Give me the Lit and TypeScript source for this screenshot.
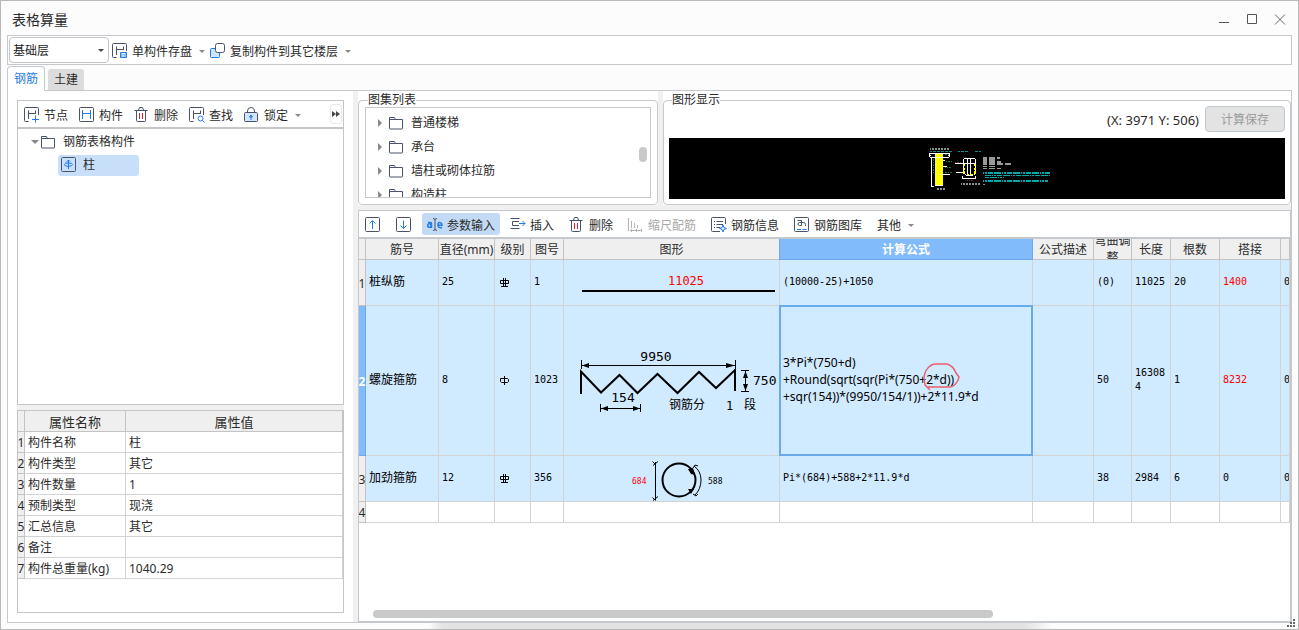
import { LitElement, html, css, svg, nothing, TemplateResult } from "lit";
import { customElement, property, state } from "lit/decorators.js";
import { classMap } from "lit/directives/class-map.js";

const INK = "#4a5268";
const BLUE = "#1f7be8";

const frame = svg`<path d="M4.500 14.500H1.500a1 1 0 0 1-1-1v-12a1 1 0 0 1 1-1h12a1 1 0 0 1 1 1V8" stroke=${INK}/><path d="M4.500 3.500V12M11.500 3.500V7M4.500 6.500h7" stroke=${INK}/>`;

const icons: Record<string, TemplateResult> = {
  save: svg`${frame}<path d="M8.500 9.500h6v5h-6z" fill="#8fbcf5" stroke=${BLUE}/><path d="M10 10.500h3M10.500 13h2" stroke="#fff"/>`,
  copy: svg`<path d="M6 5.500H1.500a1 1 0 0 0-1 1v7a1 1 0 0 0 1 1h7a1 1 0 0 0 1-1V10" fill="#cfe3fb" stroke=${BLUE}/><rect x="5.500" y="0.500" width="9" height="9" rx="2" fill="#fff" stroke=${INK}/>`,
  node: svg`${frame}<path d="M11.500 8.500v7M8 12.500h7" stroke=${BLUE}/>`,
  part: svg`<rect x="0.500" y="0.500" width="14" height="14" rx="1" stroke=${INK}/><path d="M3.500 3v9M11.500 3v9M3.500 6.500h8" stroke=${BLUE}/>`,
  trash: svg`<path d="M0.500 3.500h13M2.500 3.500v10a1 1 0 0 0 1 1h7a1 1 0 0 0 1-1v-10M4.500 3l1-2.500h3L9.500 3" stroke=${INK}/><path d="M5.500 6v6M8.500 6v6" stroke="#e0202c"/>`,
  find: svg`${frame}<circle cx="11.500" cy="11.500" r="2.500" stroke=${BLUE}/><path d="M13.500 13.500l2 2" stroke=${BLUE}/>`,
  lock: svg`<path d="M3.500 6V4a3.500 3.500 0 0 1 7 0v2" stroke=${INK}/><rect x="0.500" y="5.500" width="13" height="9" rx="1" fill="#d3e5fc" stroke=${INK}/><path d="M7 8v5M5.500 10L7 8l1.500 2z" stroke=${BLUE}/>`,
  up: svg`<rect x="0.500" y="0.500" width="14" height="14" rx="1" stroke=${INK}/><path d="M7.500 12V4M4.500 6.500l3-3 3 3" stroke=${BLUE}/>`,
  down: svg`<rect x="0.500" y="0.500" width="14" height="14" rx="1" stroke=${INK}/><path d="M7.500 3.500v8M4.500 8.500l3 3 3-3" stroke=${BLUE}/>`,
  param: svg`<circle cx="2.500" cy="8.500" r="1.800" stroke=${BLUE} stroke-width="1.500"/><path d="M1 5.500h2.500q1 0 1 1V11" stroke=${BLUE} stroke-width="1.500"/><path d="M6 1.500q2 0 2 1.500v9q0 1.500-2 1.500M10 1.500q-2 0-2 1.500M10 13.500q-2 0-2-1.500" stroke=${INK}/><path d="M15 10.500q-4 .8-4-2.500t2.300-2.300Q15 6 15 8.200h-4" stroke=${BLUE} stroke-width="1.500"/>`,
  insert: svg`<path d="M0.500 1.500h9M0.500 11.500h9M9 4.500H2.500v4H9" stroke=${INK}/><path d="M9 6.500h6M12.500 4l2.500 2.500L12.500 9" stroke=${BLUE}/>`,
  scale: svg`<path d="M0.500 1v13M3.500 4v7M6.500 6v5M9.500 8v3M2 13.500h12M3.500 12v3M8.500 12v3M13.500 12v3" stroke="#b4b4b4"/>`,
  info: svg`<path d="M9 14.500H1.500a1 1 0 0 1-1-1v-12a1 1 0 0 1 1-1h12a1 1 0 0 1 1 1V7" stroke=${INK}/><path d="M3 4.500h1M5.500 4.500H12M3 7.500h1M5.500 7.500H12M3 10.500h1M5.500 10.500H9" stroke=${INK}/><path d="M12 8l1 2.500 2.500 1-2.500 1-1 2.500-1-2.500-2.500-1 2.500-1z" fill="#dceafd" stroke=${BLUE}/>`,
  library: svg`<rect x="0.500" y="0.500" width="14" height="14" rx="1" stroke=${INK}/><path d="M3.500 3.500h4v5h-2a1.500 1.500 0 0 1 0-3h4a2 2 0 0 1 2 2V9" stroke=${INK}/><path d="M3 12.500h4M8.500 12.500h4" stroke=${BLUE}/>`,
  folder: svg`<path d="M0.500 13.500v-11h5l1 2h7v9a.5.5 0 0 1-.5.5h-12a.5.5 0 0 1-.5-.5zM0.500 4.500h7" stroke=${INK}/>`,
  column: svg`<rect x="0.500" y="0.500" width="14" height="14" rx="1" stroke=${INK}/><path d="M7.500 3v9M5 5.500L7.500 3 9 4.500M3.500 7.500q0-1.500 4-1.500t4 1.500-4 1.800-4-1.800z" stroke=${BLUE}/>`,
};

@customElement("ui-icon")
class UiIcon extends LitElement {
  static styles = css`
    :host { display: block; flex: none; width: 16px; height: 16px; }
    .glyph { display: block; }
  `;
  @property() name = "";
  render() {
    return html`<svg class="glyph" width="16" height="16" viewBox="0 0 16 16" fill="none" aria-hidden="true">${icons[this.name]}</svg>`;
  }
}

interface Tool { icon?: string; label: string; text?: boolean; menu?: boolean; active?: boolean; disabled?: boolean }

@customElement("tool-bar")
class ToolBar extends LitElement {
  static styles = css`
    :host { display: flex; align-items: center; gap: 11px; min-width: 0; }
    :host([padded]), :host([compact]) { gap: 5px; }
    .tool {
      display: flex; align-items: center; gap: 4px; flex: none; box-sizing: border-box;
      margin: 0; padding: 2px 0 0; border: 0; border-radius: 3px; background: none;
      height: 22px; color: #2b2b2b; white-space: nowrap;
      font: 12px/18px "Noto Sans", "Noto Sans CJK SC", sans-serif;
    }
    :host([padded]) .tool { padding: 2px 5px 0; }
    .active { background: #c2daf4; }
    .tool:disabled { color: #a9a9a9; }
    .label { padding-top: 2px; }
    .caret { border: 3px solid transparent; border-top-color: #8a8a8a; border-bottom: 0; margin-left: 3px; }
  `;
  @property({ attribute: false }) tools: Tool[] = [];
  render() {
    return this.tools.map((t) => html`
      <button class=${classMap({ tool: true, active: !!t.active })} ?disabled=${t.disabled} aria-label=${t.label}>
        ${t.icon ? html`<ui-icon name=${t.icon}></ui-icon>` : nothing}
        ${t.text === false ? nothing : html`<span class="label">${t.label}</span>`}
        ${t.menu ? html`<span class="caret"></span>` : nothing}
      </button>`);
  }
}

/* Reinforcement grade marks: plain bar and ribbed bar */
const plainBar = html`<svg class="grade" width="11" height="11" viewBox="0 0 11 11" role="img" aria-label="HPB300"><path d="M1.500 3.500h7l1 1v2l-1 1h-6l-1-1zM5.500 1v9" fill="none" stroke="#000"/></svg>`;
const ribbedBar = html`<svg class="grade" width="11" height="11" viewBox="0 0 11 11" role="img" aria-label="HRB400"><path d="M1.500 3.500h8M1.500 6.500h8M1.500 3.500v3M9.500 3.500v3M4.500 1v8.500M6.500 1v8.500M2 9.500h7" fill="none" stroke="#000"/></svg>`;

const straightShape = html`<svg class="shape" width="215" height="45" viewBox="0 0 215 45">
  <text class="dim red" x="122" y="25" text-anchor="middle">11025</text>
  <path d="M18 31H211" stroke="#000" stroke-width="2"/></svg>`;

const spiralShape = html`<svg class="shape" width="215" height="149" viewBox="0 1 215 149">
  <g fill="none" stroke="#000">
    <path d="M17.500 55v9M171.500 55v9M17 60.500h154M36.500 99v8M76.500 99v8M36 103.500h40M177 65.500h8M177 86.500h8M181.500 66v20"/>
    <path stroke-width="2" d="M17 89V66.500L37 87.500 55.500 70 73.500 88 93.500 69 113.500 88 135 67 152 83 171 65v21"/>
  </g>
  <path d="M18 60.500l7-2.500v5zM171 60.500l-9-2.500v5zM37 103.500l7-2.500v5zM76 103.500l-7-2.500v5zM181.500 66l-2.500 7h5zM181.500 86l-2.500-7h5z"/>
  <text class="big" x="92" y="56" text-anchor="middle">9950</text>
  <text class="big" x="59" y="97" text-anchor="middle">154</text>
  <text class="big" x="189" y="80">750</text>
  <text class="han" x="105" y="104">钢筋分</text>
  <text class="dim" x="162" y="105">1</text>
  <text class="han" x="180" y="104">段</text></svg>`;

const ringShape = html`<svg class="shape" width="215" height="45" viewBox="0 0 215 45">
  <g fill="none" stroke="#000">
    <path d="M91.500 6v38M88.500 5.500l3 3M89 9.500l5-4M89 44.500l5-4M88.500 41.500l3 3"/>
    <circle cx="115" cy="24" r="16.500" stroke-width="2"/>
    <path d="M130 10q7 5 7 14t-6 15M129 12l2-3 3 1M129 38l3 2 2-2"/>
  </g>
  <path d="M124 13l5-1 2 7-4-1zM124 33l6 0-3 5z"/>
  <text class="tiny red" x="68" y="28">684</text>
  <text class="tiny" x="144" y="28">588</text></svg>`;

const drawing = html`<svg class="cad" viewBox="0 0 616 61" role="img" aria-label="图形显示">
  <g transform="translate(251 2) scale(.3333)" fill="none" stroke-width="3" shape-rendering="crispEdges">
    <path d="M30 27h60M50 147h25M123 132h58M190 134h5" stroke="#8d8d8d" stroke-width="4" stroke-dasharray="4 1 3 1"/>
    <path d="M30 34h70M114 34h32M164 34h20" stroke="#0a8f93" stroke-dasharray="6 2 3 1"/>
    <path d="M45 42h24v96H45z" fill="#ff0" stroke="none"/>
    <path d="M30 40h58v12H30zM27 46h6M84 46h6M34 52v88h8M46 138h22M68 62h8M68 80h12M62 103h28M105 72h26M108 97h22"/>
    <path d="M42 56v44M74 45h14M78 66h20M76 84h20M74 98h22" stroke="#17851d" stroke-dasharray="3 2"/>
    <path d="M132 56h34v44l-6 6h-20l-8-6zM143 56v50M153 56v50M132 70h34M128 108v8h40v-8"/>
    <path d="M132 72v30M166 72v30M140 104h18" stroke="#ff0" stroke-width="5" stroke-dasharray="7 4"/>
    <path d="M190 54h50M190 60h38M190 66h52M190 72h88M190 79h36M190 86h52" stroke="#999" stroke-width="4" stroke-dasharray="4 1 2 1"/>
    <path d="M130 52h10M142 122h20M105 69h20" stroke="#b33" stroke-width="2" stroke-dasharray="3 2"/>
    <path d="M188 99h205M196 106h194M195 112h56M188 123h195" stroke="#0aa" stroke-width="4" stroke-dasharray="5 1 7 2 3 1"/>
  </g></svg>`;

const bars = [
  { cls: "bar", name: "桩纵筋", dia: "25", grade: ribbedBar, no: "1", shape: straightShape, formula: html`(10000-25)+1050`, bend: "(0)", len: "11025", count: "20", lap: "1400", last: "0" },
  { cls: "bar tall current", name: "螺旋箍筋", dia: "8", grade: plainBar, no: "1023", shape: spiralShape, bend: "50", len: "163084", count: "1", lap: "8232", last: "0",
    formula: html`3*Pi*(750+d)<br>+Round(sqrt(sqr(Pi*(750+<span class="noted">2*d))<svg class="note" width="37" height="28" viewBox="0 0 37 28" fill="none" stroke="#e8606c" stroke-width="1.500"><path d="M1 16C1 7 7 1 13 1h11c6 2 8 6 9 9l3 4c-1 6-6 10-9 10H4l3 3-5-5z"/></svg></span><br>+sqr(154))*(9950/154/1))+2*11.9*d` },
  { cls: "bar", name: "加劲箍筋", dia: "12", grade: ribbedBar, no: "356", shape: ringShape, formula: html`Pi*(684)+588+2*11.9*d`, bend: "38", len: "2984", count: "6", lap: "0", last: "0" },
];

const properties = [["构件名称", "柱"], ["构件类型", "其它"], ["构件数量", "1"], ["预制类型", "现浇"], ["汇总信息", "其它"], ["备注", ""], ["构件总重量(kg)", "1040.29"]];

@customElement("app-root")
class AppRoot extends LitElement {
  static styles = css`
    :host {
      display: block; height: 100vh; color: #2b2b2b;
      font: 12px/18px "Noto Sans", "Noto Sans CJK SC", sans-serif;
    }
    * { box-sizing: border-box; }
    button { font: inherit; color: inherit; margin: 0; padding: 0; border: 0; background: none; }
    ul { list-style: none; margin: 0; padding: 0; }
    .window {
      position: relative; display: flex; flex-direction: column; height: 100%; overflow: hidden;
      border: 1px solid #b9b9b9; padding: 0 6px 6px;
      background: linear-gradient(90deg, transparent 33%, #e3e3e3 34%, #e3e3e3 79%, transparent 81%) bottom / 100% 6px no-repeat #fcfcfd;
    }
    .title-bar { display: flex; align-items: center; justify-content: space-between; flex: 0 0 34px; padding: 4px 6px 0 5px; }
    .title { margin: 0; font-size: 14px; font-weight: 400; line-height: 20px; }
    .window-buttons { display: flex; gap: 16px; }
    .window-button { width: 12px; height: 12px; }
    .window-button svg { display: block; }
    .command-bar { display: flex; align-items: center; gap: 3px; flex: 0 0 30px; padding-left: 1px; border: 1px solid #c5c8cc; background: #fff; }
    .floor-box { position: relative; flex: none; width: 100px; height: 26px; }
    .floor {
      appearance: none; width: 100%; height: 100%; margin: 0; padding: 2px 3px 0;
      border: 1px solid #c2c4c8; border-radius: 4px; background: #fff; color: #222; font: inherit;
    }
    .caret { border: 3px solid transparent; border-top-color: #444; border-bottom: 0; }
    .floor-box .caret { position: absolute; right: 5px; top: 12px; pointer-events: none; }
    .tabs { display: flex; align-items: flex-end; gap: 3px; flex: 0 0 25px; }
    .tab { position: relative; height: 21px; width: 36px; padding-top: 1px; background: #dcdcdc; border-radius: 3px 3px 0 0; }
    .tab.on { height: 25px; width: 38px; margin-bottom: -1px; z-index: 1; padding: 0; background: #fff; color: #1f7be8; border: 1px solid #c5c8cc; border-bottom: 0; border-radius: 4px 4px 0 0; }
    .main { display: flex; flex: 1; min-height: 0; border: 1px solid #c5c8cc; background: #fff; }
    .side { display: flex; flex-direction: column; flex: 0 0 345px; padding: 9px; }
    .side-tools { display: flex; align-items: center; justify-content: space-between; flex: 0 0 29px; padding: 0 1px 0 6px; border: 1px solid #c5c5c5; border-bottom-width: 2px; }
    .more { display: grid; place-items: center; width: 12px; height: 20px; border: 1px solid #e8e8e8; border-radius: 3px; }
    .tree { flex: 1; min-height: 0; border: 1px solid #c5c5c5; border-top: 0; }
    .node { display: flex; align-items: center; height: 24px; }
    .root { padding: 2px 0 0 13px; }
    .open { border: 4px solid transparent; border-top-color: #888; border-bottom: 0; margin-right: 2px; }
    .closed { border: 4px solid transparent; border-left-color: #888; border-right: 0; margin-right: 7px; }
    .node ui-icon + span { margin-left: 6px; }
    .leaf { margin-left: 40px; }
    .picked { display: flex; align-items: center; width: 81px; height: 21px; padding-left: 3px; border-radius: 3px; background: #c8dff9; }
    .props { flex: 0 0 203px; margin-top: 5px; border: 1px solid #c5c5c5; overflow: hidden; }
    .gap { flex: none; height: 5px; background: #f0f0f0; margin-bottom: -5px; }
    table { width: 100%; table-layout: fixed; border-collapse: separate; border-spacing: 0; }
    th, td { padding: 2px 0 0; font-weight: 400; height: 21px; border: 0 solid #d3d3d3; border-width: 0 1px 1px 0; overflow: hidden; }
    th { background: #efefef; border-color: #c3c3c3; }
    td { text-align: left; }
    .props td { padding: 2px 3px 0; }
    .props thead th { font-size: 13px; }
    .tick { width: 7px; }
    .prop-name { width: 101px; }
    .row-no { overflow: visible; white-space: nowrap; }
    .row-no span { display: flex; justify-content: center; }
    .work { display: flex; flex-direction: column; flex: 1; min-width: 0; background: #f0f0f0; padding-left: 5px; }
    .upper { display: flex; gap: 5px; flex: 0 0 114px; }
    .group { display: flex; background: #fff; min-width: 0; }
    .atlas { flex: 0 0 300px; }
    .preview { flex: 1; }
    fieldset { flex: 1; min-width: 0; margin: 0; padding: 0 5px; border: 1px solid #c9c9c9; border-radius: 4px; }
    .atlas fieldset { padding: 0 6px; }
    legend { padding: 0; margin-left: 3px; line-height: 18px; }
    .list { position: relative; height: 91px; margin-top: -2px; padding: 3px 0 0 12px; border: 1px solid #c9c9c9; overflow: hidden; }
    .list-thumb { position: absolute; right: 3px; top: 39px; width: 8px; height: 15px; border-radius: 4px; background: #c9c9c9; }
    .preview-head { display: flex; justify-content: flex-end; align-items: center; gap: 6px; margin-top: -3px; }
    .coords { font-size: 13px; padding-top: 2px; }
    .calc { width: 80px; height: 26px; padding-top: 1px; border: 1px solid #c0c8d4; border-radius: 4px; background: #e3e3e3; color: #9b9b9b; }
    .cad { display: block; width: 100%; height: 61px; margin-top: 6px; background: #000; stroke: #fff; }
    .sheet { position: relative; flex: 1; min-height: 0; margin-top: 5px; border: 1px solid #c5c8cc; background: #fff; overflow: hidden; }
    .sheet-tools { height: 28px; padding: 0 1px; border-bottom: 2px solid #c5c8cc; display: flex; align-items: center; }
    .sheet thead th { white-space: nowrap; }
    .sheet thead .wrap { padding: 0; white-space: normal; }
    .head { display: flex; align-items: center; justify-content: center; height: 20px; line-height: 17px; overflow: hidden; text-align: center; }
    .sheet .here { background: #82bbfb; border-color: #6aa9ea; box-shadow: -1px 0 #6aa9ea; color: #fff; font-weight: 700; overflow: visible; }
    .bar td { height: 46px; padding: 0 3px 2px; background: #d0eaff; color: #000; line-height: 14px; font-size: 10px; font-family: "DejaVu Sans Mono", "Noto Sans CJK SC", monospace; word-break: break-all; }
    .tall td { height: 150px; }
    .bar .name { font-size: 12px; }
    .bar .drawing { padding: 0; }
    .bar .mark { padding: 0 4px; }
    .bar .lap { color: #f00; }
    .bar .narrow { padding: 0 0 2px 3px; }
    .current .formula { position: relative; overflow: visible; font: 12px/17px "Noto Sans", "Noto Sans CJK SC", sans-serif; word-break: normal; }
    .current .formula::after { content: ""; position: absolute; inset: -1px; border: 2px solid #6aa9ea; pointer-events: none; }
    .current .row-no { background: #82bbfb; border-color: #6aa9ea; color: #fff; font-weight: 700; }
    .noted { position: relative; }
    .note { position: absolute; left: -3px; top: -8px; }
    .grade, .shape { display: block; }
    .dim { font: 12px "DejaVu Sans Mono", monospace; }
    .big { font: 13px "DejaVu Sans Mono", monospace; }
    .tiny { font: 8px "DejaVu Sans Mono", monospace; }
    .han { font: 12px "Noto Sans CJK SC", sans-serif; }
    .red { fill: #f00; }
    .c-name { width: 73px; } .c-dia { width: 56px; } .c-grade { width: 36px; } .c-no { width: 33px; }
    .c-shape { width: 216px; } .c-desc, .c-lap { width: 61px; } .c-bend { width: 38px; } .c-len { width: 39px; }
    .c-count { width: 49px; } .c-last { width: 9px; }
    .scroll { position: absolute; left: 14px; bottom: 3px; width: 66.600%; height: 8px; border-radius: 4px; background: #c9c9c9; }
    .grip { position: absolute; right: 3px; bottom: 2px; }
  `;

  @state() private tab = "钢筋";

  private folderRow(name: string) {
    return html`<li class="node"><span class="closed"></span><ui-icon name="folder"></ui-icon><span>${name}</span></li>`;
  }

  render() {
    return html`
      <div class="window">
        <header class="title-bar">
          <h1 class="title">表格算量</h1>
          <div class="window-buttons">
            <button class="window-button" aria-label="最小化"><svg width="12" height="12"><path d="M1 8.500h10" stroke="#555"/></svg></button>
            <button class="window-button" aria-label="最大化"><svg width="12" height="12"><path d="M1.500 0.500h9v9h-9z" fill="none" stroke="#555"/></svg></button>
            <button class="window-button" aria-label="关闭"><svg width="12" height="12"><path d="M1 0.500l10 10M11 0.500l-10 10" stroke="#666"/></svg></button>
          </div>
        </header>
        <div class="command-bar">
          <div class="floor-box">
            <select class="floor" aria-label="楼层"><option>基础层</option></select><span class="caret"></span>
          </div>
          <tool-bar compact .tools=${[
            { icon: "save", label: "单构件存盘", menu: true },
            { icon: "copy", label: "复制构件到其它楼层", menu: true },
          ]}></tool-bar>
        </div>
        <nav class="tabs" role="tablist">
          ${["钢筋", "土建"].map((t) => html`<button role="tab" aria-selected=${this.tab === t} class=${classMap({ tab: true, on: this.tab === t })} @click=${() => (this.tab = t)}>${t}</button>`)}
        </nav>
        <main class="main">
          <section class="side">
            <div class="side-tools">
              <tool-bar .tools=${[
                { icon: "node", label: "节点" }, { icon: "part", label: "构件" }, { icon: "trash", label: "删除" },
                { icon: "find", label: "查找" }, { icon: "lock", label: "锁定", menu: true },
              ]}></tool-bar>
              <button class="more" aria-label="更多"><svg width="8" height="6"><path d="M0 0l4 3-4 3zM4 0l4 3-4 3z" fill="#444"/></svg></button>
            </div>
            <ul class="tree">
              <li>
                <div class="node root"><span class="open"></span><ui-icon name="folder"></ui-icon><span>钢筋表格构件</span></div>
                <ul><li class="node leaf"><div class="picked"><ui-icon name="column"></ui-icon><span>柱</span></div></li></ul>
              </li>
            </ul>
            <div class="gap"></div>
            <div class="props">
              <table>
                <thead><tr><th class="tick"></th><th class="prop-name">属性名称</th><th>属性值</th></tr></thead>
                <tbody>${properties.map(([k, v], i) => html`<tr><th class="row-no"><span>${i + 1}</span></th><td>${k}</td><td>${v}</td></tr>`)}</tbody>
              </table>
            </div>
          </section>
          <section class="work">
            <div class="upper">
              <div class="group atlas">
                <fieldset><legend>图集列表</legend>
                  <div class="list">
                    <ul>${["普通楼梯", "承台", "墙柱或砌体拉筋", "构造柱"].map((n) => this.folderRow(n))}</ul>
                    <span class="list-thumb"></span>
                  </div>
                </fieldset>
              </div>
              <div class="group preview">
                <fieldset><legend>图形显示</legend>
                  <div class="preview-head"><span class="coords">(X: 3971 Y: 506)</span><button class="calc" disabled>计算保存</button></div>
                  ${drawing}
                </fieldset>
              </div>
            </div>
            <div class="sheet">
              <div class="sheet-tools">
                <tool-bar padded .tools=${[
                  { icon: "up", label: "上移", text: false }, { icon: "down", label: "下移", text: false },
                  { icon: "param", label: "参数输入", active: true }, { icon: "insert", label: "插入" },
                  { icon: "trash", label: "删除" }, { icon: "scale", label: "缩尺配筋", disabled: true },
                  { icon: "info", label: "钢筋信息" }, { icon: "library", label: "钢筋图库" }, { label: "其他", menu: true },
                ]}></tool-bar>
              </div>
              <table>
                <thead><tr>
                  <th class="tick"></th>
                  <th class="c-name">筋号</th><th class="c-dia">直径(mm)</th><th class="c-grade">级别</th><th class="c-no">图号</th>
                  <th class="c-shape">图形</th><th class="here">计算公式</th><th class="c-desc">公式描述</th>
                  <th class="c-bend wrap"><div class="head">弯曲调整</div></th><th class="c-len">长度</th><th class="c-count">根数</th>
                  <th class="c-lap">搭接</th><th class="c-last"></th>
                </tr></thead>
                <tbody>
                  ${bars.map((b, i) => html`<tr class=${b.cls}>
                    <th class="row-no"><span>${i + 1}</span></th>
                    <td class="name">${b.name}</td><td>${b.dia}</td><td class="mark">${b.grade}</td><td class="narrow">${b.no}</td>
                    <td class="drawing">${b.shape}</td><td class="formula">${b.formula}</td><td></td>
                    <td>${b.bend}</td><td class="narrow">${b.len}</td><td>${b.count}</td>
                    <td class=${classMap({ lap: b.lap !== "0" })}>${b.lap}</td><td class="narrow">${b.last}</td>
                  </tr>`)}
                  <tr><th class="row-no"><span>4</span></th>${Array.from({ length: 12 }, () => html`<td></td>`)}</tr>
                </tbody>
              </table>
              <span class="scroll"></span>
            </div>
          </section>
        </main>
        <svg class="grip" width="8" height="8" fill="#666"><path d="M6 0h2v2h-2zM6 3h2v2h-2zM6 6h2v2h-2zM3 3h2v2h-2zM3 6h2v2h-2zM0 6h2v2h-2z"/></svg>
      </div>`;
  }
}
